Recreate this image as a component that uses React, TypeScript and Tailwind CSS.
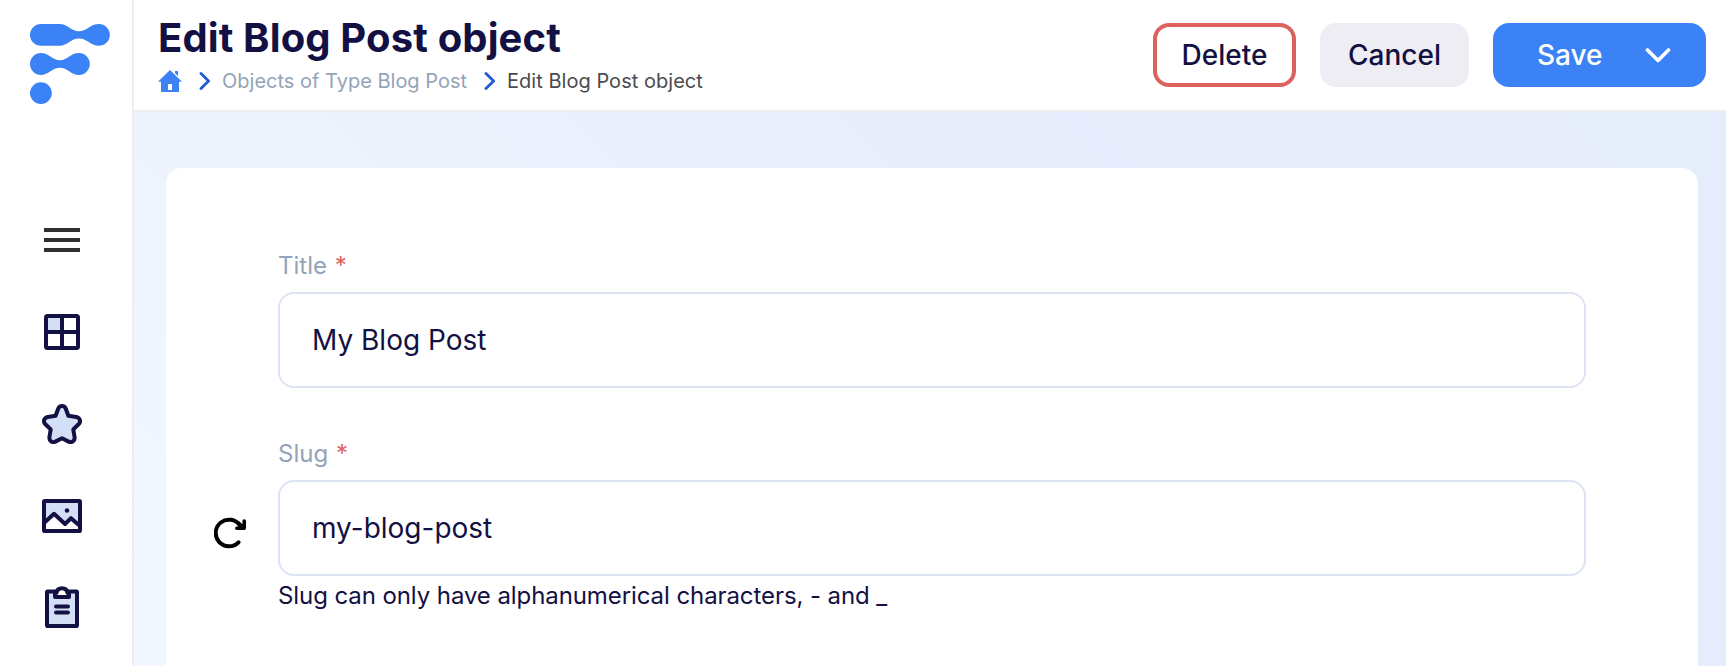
import type { ReactNode } from "react";

const NAVY = "#131043";
const TINT = "#d3dff5";

function Logo() {
  return (
    <svg width="80" height="80" viewBox="0 0 80 80" fill="#3b82f6">
      <path d="M10.9 0H29.5C37.5 0 41 7.2 49 7.2C57 7.2 60.500 0 68.900 0A10.900 10.900 0 0 1 68.900 21.800C60.500 21.800 57 14.600 49 14.600C41 14.600 37.500 21.800 29.500 21.800H10.900A10.900 10.900 0 0 1 10.900 0Z" />
      <path d="M10.900 29.100C18.500 29.100 22.500 36.300 29.900 36.300C37.300 36.300 41 29.100 48.900 29.100A10.900 10.900 0 0 1 48.900 50.900C41 50.900 37.300 43.700 29.900 43.700C22.500 43.700 18.500 50.900 10.900 50.900A10.900 10.900 0 0 1 10.900 29.100Z" />
      <circle cx="10.900" cy="69.100" r="10.900" />
    </svg>
  );
}

function MenuIcon() {
  return (
    <svg width="40" height="24" viewBox="0 0 40 24" fill="#2f2f31">
      <path d="M2 0H38V4H2ZM2 10H38V14H2ZM2 20H38V24H2Z" />
    </svg>
  );
}

function GridIcon() {
  return (
    <svg width="40" height="36" viewBox="0 0 40 36" fill="none" stroke={NAVY} strokeWidth="4">
      <rect x="4" y="2" width="16" height="16" fill={TINT} stroke="none" />
      <rect x="4" y="2" width="32" height="32" rx="1.500" />
      <path d="M20 2V34M4 18H36" />
    </svg>
  );
}

function StarIcon() {
  return (
    <svg width="40" height="40" viewBox="0 0 40 40" fill={TINT} stroke={NAVY} strokeWidth="4" strokeLinejoin="round">
      <path d="M16.2 4.700C17.500 1.200 22.500 1.200 23.800 4.700L26.400 11.800L34.200 12.900C38 13.500 39.300 17.700 36.600 20.300L31.300 25.400L32.600 33.300C33 37 29.700 39.200 26.600 37.600L20 34.200L13.400 37.600C10.300 39.200 7 37 7.400 33.300L8.700 25.400L3.400 20.300C.7 17.700 2 13.500 5.800 12.900L13.600 11.800Z" />
    </svg>
  );
}

function ImageIcon() {
  return (
    <svg width="40" height="34" viewBox="0 0 40 34" fill="none" stroke={NAVY} strokeWidth="4" strokeLinejoin="round">
      <path d="M2 2H38V27L29 19L23 25L12 15L2 24Z" fill={TINT} stroke="none" />
      <rect x="2" y="2" width="36" height="30" rx="0.800" />
      <path d="M2 24L12 14.800L23 25L29 19.200L38 27" />
      <circle cx="25" cy="11.500" r="2.300" fill={NAVY} stroke="none" />
    </svg>
  );
}

function ClipboardIcon() {
  return (
    <svg width="40" height="42" viewBox="0 0 40 42" fill="none" stroke={NAVY} strokeWidth="4" strokeLinejoin="round" strokeLinecap="round">
      <rect x="5" y="5.500" width="30" height="34.500" rx="0.800" fill={TINT} />
      <path d="M13 11V7H14.500C15.500 0.800 24.500 0.800 25.500 7H27V11Z" fill="#fff" />
      <path d="M14 20.500H26M14 26.500H26" />
    </svg>
  );
}

function HomeIcon() {
  return (
    <svg width="24" height="22" viewBox="0 0 24 22" fill="#3b82f6">
      <path d="M12 0L24 11.700H21V22H3V11.700H0ZM10 14V20H14V14Z" fillRule="evenodd" />
      <path d="M17 1H20V6L17 3.200Z" />
    </svg>
  );
}

function CrumbArrow() {
  return (
    <svg width="12" height="18" viewBox="0 0 12 18" fill="none" stroke="#2159d8" strokeWidth="2.800" strokeLinecap="round" strokeLinejoin="round">
      <path d="M2 1.500L9.600 9L2 16.500" />
    </svg>
  );
}

function RefreshIcon() {
  return (
    <svg width="32" height="32" viewBox="0 0 32 32" fill="none" stroke="#000" strokeWidth="4" strokeLinecap="round" strokeLinejoin="round">
      <path d="M24.500 25.300A13.300 13.300 0 1 1 26 8.500" />
      <path d="M22.800 11.300H30.200M30.200 11.300V4M28 9.500L25 6.500" strokeWidth="3.600" />
    </svg>
  );
}

function Field({ label, value, help, action }: { label: string; value: string; help?: string; action?: ReactNode }) {
  return (
    <div>
      <label className="block pl-28 text-2xl leading-8 text-[#94a3b8]">
        {label} <span className="ml-px text-[#dd625e]">*</span>
      </label>
      <div className="mt-2.5 flex">
        <div className="flex w-28 items-center pt-[9px] pl-12">{action}</div>
        <div className="flex h-24 w-[1308px] items-center rounded-2xl border-2 border-[#dce4f3] pl-8 text-[28px]">
          {value}
        </div>
      </div>
      {help && <p className="mt-1 pl-28 text-2xl leading-8 tracking-[-0.085px]">{help}</p>}
    </div>
  );
}

export default function App() {
  return (
    <div className="flex h-[666px] w-[1726px] overflow-hidden bg-white font-[Inter,sans-serif] text-[#131043]">
      <aside className="flex w-[134px] shrink-0 flex-col border-r-2 border-[#ededf4] pt-6">
        <div className="pl-[30px]">
          <Logo />
        </div>
        <nav className="flex flex-col pt-[124px] pl-[42px]">
          <MenuIcon />
          <div className="pt-[62px]"><GridIcon /></div>
          <div className="pt-[54px]"><StarIcon /></div>
          <div className="pt-[55px]"><ImageIcon /></div>
          <div className="pt-[53px]"><ClipboardIcon /></div>
        </nav>
      </aside>
      <div className="flex grow flex-col">
        <header className="flex h-28 shrink-0 justify-between border-b-2 border-[#ededf2] pr-5 pl-6">
          <div className="pt-3.5">
            <h1 className="text-[40px] leading-[48px] font-bold tracking-[0.13px] whitespace-nowrap">Edit Blog Post object</h1>
            <div className="mt-[7px] flex items-center text-xl leading-6 whitespace-nowrap">
              <HomeIcon />
              <span className="ml-[17px]"><CrumbArrow /></span>
              <span className="ml-[11px] text-[#94a3b8]">Objects of Type Blog Post</span>
              <span className="ml-[17px]"><CrumbArrow /></span>
              <span className="ml-[11px] tracking-[0.03px] text-[#4b4b4f]">Edit Blog Post object</span>
            </div>
          </div>
          <div className="flex gap-6 pt-[23px] text-[28px] font-medium">
            <button className="h-16 w-[143px] rounded-2xl border-4 border-[#dd625e]">Delete</button>
            <button className="h-16 w-[149px] rounded-2xl bg-[#eeedf3]">Cancel</button>
            <button className="flex h-16 w-[213px] items-center rounded-2xl bg-[#3b82f6] pl-11 text-white">
              <span className="w-[108px] text-left">Save</span>
              <svg width="26" height="16" viewBox="0 0 26 16" fill="none" stroke="#fff" strokeWidth="3.600" strokeLinecap="round" strokeLinejoin="round">
                <path d="M2.500 3L13 13.500L23.500 3" />
              </svg>
            </button>
          </div>
        </header>
        <main className="grow bg-[linear-gradient(45deg,#f3f7ff_0%,#eff3fe_26%,#ebf0fc_43%,#e6ecfb_70%,#e5ecfa_100%)] pt-14 pr-7 pl-8">
          <section className="flex h-full flex-col gap-[50px] rounded-t-2xl bg-white pt-[82px]">
            <Field label="Title" value="My Blog Post" />
            <Field
              label="Slug"
              value="my-blog-post"
              help="Slug can only have alphanumerical characters, - and _"
              action={<RefreshIcon />}
            />
          </section>
        </main>
      </div>
    </div>
  );
}
